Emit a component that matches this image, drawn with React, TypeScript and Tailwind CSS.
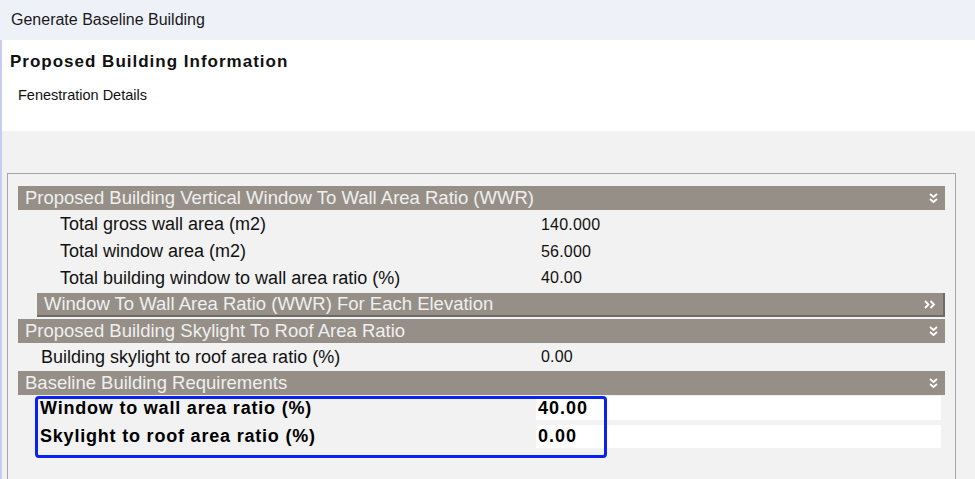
import React from 'react'

const font = { fontFamily: '"Liberation Sans", Arial, sans-serif' }

const DoubleDown = () => (
  <svg width="9" height="11" viewBox="0 0 9 11" className="shrink-0">
    <path d="M1 1 L4.5 4 L8 1" stroke="#fff" strokeWidth="1.8" fill="none" />
    <path d="M1 6 L4.5 9 L8 6" stroke="#fff" strokeWidth="1.8" fill="none" />
  </svg>
)

const DoubleRight = () => (
  <svg width="12" height="9" viewBox="0 0 12 9" className="shrink-0">
    <path d="M1 1 L4.5 4.5 L1 8" stroke="#fff" strokeWidth="1.8" fill="none" />
    <path d="M6.5 1 L10 4.5 L6.5 8" stroke="#fff" strokeWidth="1.8" fill="none" />
  </svg>
)

const SectionBar = ({ title, sub }: { title: string; sub?: boolean }) => (
  <div
    className={`flex items-center justify-between h-[24px] bg-[#968f88] text-[#efefef] text-[18.5px] leading-none pl-[7px] pr-[7px] ${
      sub ? 'ml-[19px] border-r-2 border-b-2 border-[#6f6a65] pr-[4px]' : ''
    }`}
  >
    <span className="whitespace-nowrap">{title}</span>
    {sub ? <DoubleRight /> : <DoubleDown />}
  </div>
)

const InfoRow = ({ label, value, indent, h }: { label: string; value: string; indent: string; h: string }) => (
  <div className={`flex items-center ${h} text-[#111]`}>
    <div className={`w-[523px] shrink-0 text-[18px] ${indent}`}>{label}</div>
    <div className="text-[16px] tracking-[0.2px]">{value}</div>
  </div>
)

export default function App() {
  return (
    <div className="w-[975px] h-[479px] overflow-hidden flex flex-col bg-[#f2f2f2]" style={font}>
      <div className="h-[40px] shrink-0 bg-[#eff1f9] flex items-center pl-[11px] text-[16px] text-[#1a1a1a]">
        Generate Baseline Building
      </div>
      <div className="flex-1 flex flex-col border-l-2 border-[#c9cbf1]">
        <div className="h-[91px] shrink-0 bg-white pl-[8px] pt-[12px]">
          <div className="text-[17px] font-bold text-[#111] leading-[20px] tracking-[1px]">Proposed Building Information</div>
          <div className="text-[14.5px] text-[#111] pl-[8px] mt-[13px]">Fenestration Details</div>
        </div>
        <div className="flex-1 pt-[42px] pl-[5px]">
          <div className="w-[949px] h-[400px] border border-[#a6a6a6] pl-[10px] pr-[10px] pt-[12px] relative">
            <SectionBar title="Proposed Building Vertical Window To Wall Area Ratio (WWR)" />
            <div className="pt-[1px]">
              <InfoRow label="Total gross wall area (m2)" value="140.000" indent="pl-[42px]" h="h-[27px]" />
              <InfoRow label="Total window area (m2)" value="56.000" indent="pl-[42px]" h="h-[27px]" />
              <InfoRow label="Total building window to wall area ratio (%)" value="40.00" indent="pl-[42px]" h="h-[26px]" />
            </div>
            <div className="mt-[2px]">
              <SectionBar title="Window To Wall Area Ratio (WWR) For Each Elevation" sub />
            </div>
            <div className="mt-[2px]">
              <SectionBar title="Proposed Building Skylight To Roof Area Ratio" />
            </div>
            <InfoRow label="Building skylight to roof area ratio (%)" value="0.00" indent="pl-[23px]" h="h-[28px]" />
            <SectionBar title="Baseline Building Requirements" />
            <div className="flex items-center h-[24px] mt-[1px] mr-[4px] text-[#000]">
              <div className="w-[518px] shrink-0 pl-[22px] text-[18px] font-bold tracking-[0.8px]">Window to wall area ratio (%)</div>
              <div className="flex-1 h-full bg-white flex items-center pl-[2px] text-[18px] font-bold tracking-[1px]">40.00</div>
            </div>
            <div className="flex items-center h-[23px] mt-[5px] mr-[4px] text-[#000]">
              <div className="w-[518px] shrink-0 pl-[22px] text-[18px] font-bold tracking-[0.8px]">Skylight to roof area ratio (%)</div>
              <div className="flex-1 h-full bg-white flex items-center pl-[2px] text-[18px] font-bold tracking-[1px]">0.00</div>
            </div>
            <div className="absolute left-[27px] top-[222px] w-[572px] h-[62px] border-[3px] border-[#0a22f0] rounded-[4px] pointer-events-none" />
          </div>
        </div>
      </div>
    </div>
  )
}
